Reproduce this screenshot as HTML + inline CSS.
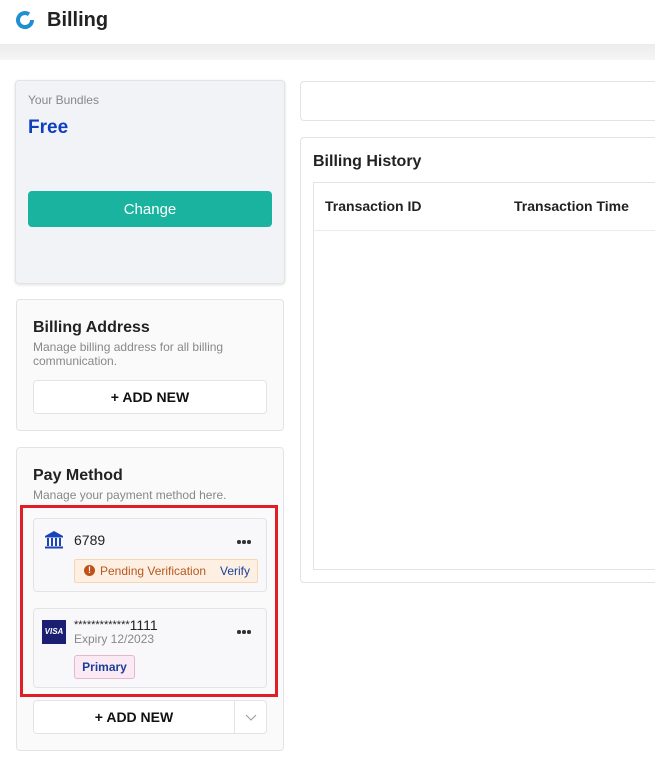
<!DOCTYPE html>
<html><head><style>
*{box-sizing:border-box;margin:0;padding:0}
body{width:655px;height:767px;overflow:hidden;background:#fff;font-family:"Liberation Sans",Arial,sans-serif;color:#222;position:relative}
.a{position:absolute}
.card{position:absolute;border:1px solid #e3e3e6;border-radius:4px;background:#fafafa}
.btn{position:absolute;background:#fff;border:1px solid #e3e3e6;border-radius:4px;font-weight:bold;font-size:14px;text-align:center;color:#111}
.gray{color:#888;font-size:12px}
.dots{position:absolute;width:16px;height:4px}
.dots i{position:absolute;top:0;width:3.5px;height:3.5px;border-radius:50%;background:#333}
</style></head><body>
<div class="a" style="left:0;top:0;width:655px;height:44px;background:#fff"></div>
<div class="a" style="left:0;top:44px;width:655px;height:16px;background:linear-gradient(#ececec,#f5f5f5)"></div>
<svg class="a" style="left:15px;top:10px" width="20" height="20" viewBox="0 0 20 20"><path d="M14 4.3 A7 7 0 1 0 17 10" fill="none" stroke="#1f8fcf" stroke-width="4"/></svg>
<div class="a" style="left:47px;top:9px;font-size:20px;font-weight:bold;color:#222">Billing</div>

<div class="card" style="left:15px;top:80px;width:270px;height:204px;background:#f2f3f7;box-shadow:0 1px 3px rgba(0,0,0,.12)"></div>
<div class="a gray" style="left:28px;top:93px">Your Bundles</div>
<div class="a" style="left:28px;top:117px;font-size:19px;font-weight:bold;color:#0f3fbf">Free</div>
<div class="a" style="left:28px;top:191px;width:244px;height:36px;background:#1ab3a0;border-radius:4px;color:#fff;font-size:15px;text-align:center;line-height:38px">Change</div>

<div class="card" style="left:16px;top:299px;width:268px;height:132px"></div>
<div class="a" style="left:33px;top:319px;font-size:16px;font-weight:bold">Billing Address</div>
<div class="a gray" style="left:33px;top:340px;line-height:14px;width:220px">Manage billing address for all billing communication.</div>
<div class="btn" style="left:33px;top:380px;width:234px;height:34px;line-height:33px">+ ADD NEW</div>

<div class="card" style="left:16px;top:447px;width:268px;height:304px"></div>
<div class="a" style="left:33px;top:467px;font-size:16px;font-weight:bold">Pay Method</div>
<div class="a gray" style="left:33px;top:488px">Manage your payment method here.</div>
<div class="a" style="left:20px;top:505px;width:258px;height:192px;border:3px solid #e01e26"></div>

<div class="card" style="left:33px;top:518px;width:234px;height:74px;background:#f8f8fa"></div>
<svg class="a" style="left:44px;top:530px" width="20" height="19" viewBox="0 0 20 19"><path d="M10 1 L19 6 L1 6 Z" fill="#1a45b8"/><rect x="1" y="6" width="18" height="1.5" fill="#1a45b8"/><rect x="3" y="8" width="2" height="8" fill="#1a45b8"/><rect x="7" y="8" width="2" height="8" fill="#1a45b8"/><rect x="11" y="8" width="2" height="8" fill="#1a45b8"/><rect x="15" y="8" width="2" height="8" fill="#1a45b8"/><rect x="1" y="16.5" width="18" height="2" fill="#1a45b8"/></svg>
<div class="a" style="left:74px;top:532px;font-size:14px">6789</div>
<div class="dots" style="left:237px;top:540px"><i style="left:0"></i><i style="left:5px"></i><i style="left:10px"></i></div>
<div class="a" style="left:74px;top:559px;width:184px;height:24px;background:#fdf0e3;border:1px solid #f5d7b5;border-radius:2px;font-size:12px;line-height:22px">
<span style="position:absolute;left:9px;top:5px;width:11px;height:11px;border-radius:50%;background:#c0501a;color:#fff;font-size:9px;line-height:11px;text-align:center;font-weight:bold">!</span>
<span style="position:absolute;left:25px;color:#b8561e">Pending Verification</span>
<span style="position:absolute;left:145px;color:#1a3f9a">Verify</span></div>

<div class="card" style="left:33px;top:608px;width:234px;height:80px;background:#f8f8fa"></div>
<div class="a" style="left:42px;top:620px;width:24px;height:24px;background:#1a1f71;color:#fff;font-size:8px;font-weight:bold;font-style:italic;text-align:center;line-height:24px">VISA</div>
<div class="a" style="left:74px;top:617px;font-size:14px"><span style="font-size:11px;vertical-align:2px">*************</span>1111</div>
<div class="a" style="left:74px;top:632px;font-size:12px;color:#888">Expiry 12/2023</div>
<div class="dots" style="left:237px;top:630px"><i style="left:0"></i><i style="left:5px"></i><i style="left:10px"></i></div>
<div class="a" style="left:74px;top:655px;width:61px;height:24px;background:#fbeaf3;border:1px solid #e2b8cd;border-radius:3px;font-size:12px;font-weight:bold;color:#1a3f9a;text-align:center;line-height:22px">Primary</div>

<div class="btn" style="left:33px;top:700px;width:234px;height:34px;line-height:33px"><span style="position:absolute;left:0;width:200px">+ ADD NEW</span><span style="position:absolute;left:200px;top:0;width:1px;height:32px;background:#e3e3e6"></span><svg style="position:absolute;left:211px;top:13px" width="12" height="8" viewBox="0 0 12 8"><path d="M1 1 L6 6 L11 1" fill="none" stroke="#999" stroke-width="1"/></svg></div>

<div class="a" style="left:300px;top:81px;width:370px;height:40px;border:1px solid #e3e3e6;border-radius:4px"></div>
<div class="a" style="left:300px;top:137px;width:370px;height:446px;border:1px solid #e3e3e6;border-radius:4px"></div>
<div class="a" style="left:313px;top:153px;font-size:16px;font-weight:bold">Billing History</div>
<div class="a" style="left:313px;top:182px;width:360px;height:388px;border:1px solid #e3e3e6"></div>
<div class="a" style="left:313px;top:230px;width:360px;height:1px;background:#ebebeb"></div>
<div class="a" style="left:325px;top:198px;font-size:14px;font-weight:bold">Transaction ID</div>
<div class="a" style="left:514px;top:198px;font-size:14px;font-weight:bold">Transaction Time</div>
</body></html>
